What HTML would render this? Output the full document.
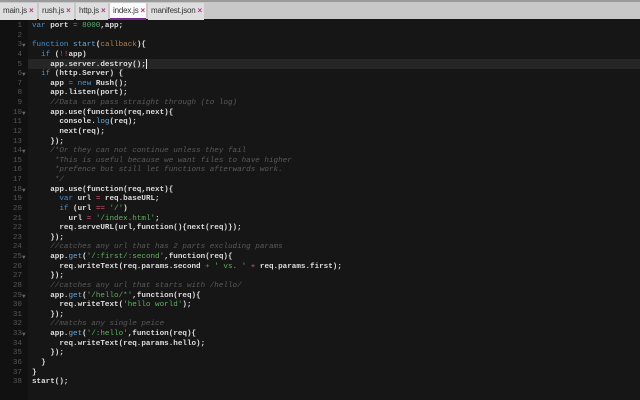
<!DOCTYPE html>
<html><head><meta charset="utf-8"><style>
*{margin:0;padding:0;box-sizing:border-box}
body{width:640px;height:400px;background:#161616;overflow:hidden;font-family:"Liberation Sans",sans-serif;position:relative}
#tabs{position:absolute;left:0;top:0;width:640px;height:19px;background:#c8c8c8;border-top:2px solid #9a9a9a;z-index:2}
.tab{position:absolute;top:1px;height:17px;background:#dedede;font-size:8px;color:#333;line-height:16px;padding-left:3px;letter-spacing:-0.2px}
.tab b{color:#b0308a;font-weight:bold;margin-left:2px}
.tab.act{background:#fafafa;border-bottom:2px solid #7a2a8a}
#gut{position:absolute;left:0;top:19px;width:28px;height:381px;background:#111}
#hl{position:absolute;left:28px;top:59px;width:612px;height:10px;background:#262626}
pre{position:absolute;top:22px;font-family:"Liberation Mono",monospace;font-size:7.6px;line-height:9.62px;}
#nums{left:0;width:22px;text-align:right;color:#555}
#fold{left:22px;color:#666;font-size:6px;line-height:9.62px}
#code{left:32px;color:#ddd;font-weight:bold}
.k{color:#4a90c8;font-weight:normal}.f{color:#6aa8d8;font-weight:normal}.p{color:#b08050;font-weight:normal}
.o{color:#d05070;font-weight:normal}.n{color:#50b070;font-weight:normal}.s{color:#60b060;font-weight:normal}
.c{color:#5a5a5a;font-style:italic;font-weight:normal}
#cur{position:absolute;left:146px;top:59px;width:1px;height:10px;background:#eee}
</style></head><body>
<div id="tabs">
<div class="tab" style="left:0;width:37px">main.js<b>×</b></div>
<div class="tab" style="left:39px;width:35px">rush.js<b>×</b></div>
<div class="tab" style="left:76px;width:32px">http.js<b>×</b></div>
<div class="tab act" style="left:110px;width:36px">index.js<b>×</b></div>
<div class="tab" style="left:148px;width:56px">manifest.json<b>×</b></div>
</div>
<div id="gut"></div>
<div id="hl"></div>
<pre id="nums">1
2
3
4
5
6
7
8
9
10
11
12
13
14
15
16
17
18
19
20
21
22
23
24
25
26
27
28
29
30
31
32
33
34
35
36
37
38</pre>
<pre id="fold">&nbsp;
&nbsp;
▼
&nbsp;
&nbsp;
▼
&nbsp;
&nbsp;
&nbsp;
▼
&nbsp;
&nbsp;
&nbsp;
▼
&nbsp;
&nbsp;
&nbsp;
▼
&nbsp;
&nbsp;
&nbsp;
&nbsp;
&nbsp;
&nbsp;
▼
&nbsp;
&nbsp;
&nbsp;
▼
&nbsp;
&nbsp;
&nbsp;
▼</pre>
<pre id="code"><span class="k">var</span> port <span class="o">=</span> <span class="n">8000</span>,app;

<span class="k">function</span> <span class="f">start</span>(<span class="p">callback</span>){
  <span class="k">if</span> (<span class="o">!!</span>app)
    app.server.destroy();
  <span class="k">if</span> (http.Server) {
    app <span class="o">=</span> <span class="k">new</span> Rush();
    app.listen(port);
    <span class="c">//Data can pass straight through (to log)</span>
    app.use(function(req,next){
      console.<span class="f">log</span>(req);
      next(req);
    });
    <span class="c">/*Or they can not continue unless they fail</span>
<span class="c">     *This is useful because we want files to have higher</span>
<span class="c">     *prefence but still let functions afterwards work.</span>
<span class="c">     */</span>
    app.use(function(req,next){
      <span class="k">var</span> url <span class="o">=</span> req.baseURL;
      <span class="k">if</span> (url <span class="o">==</span> <span class="s">'/'</span>)
        url <span class="o">=</span> <span class="s">'/index.html'</span>;
      req.serveURL(url,function(){next(req)});
    });
    <span class="c">//catches any url that has 2 parts excluding params</span>
    app.<span class="f">get</span>(<span class="s">'/:first/:second'</span>,function(req){
      req.writeText(req.params.second <span class="o">+</span> <span class="s">' vs. '</span> <span class="o">+</span> req.params.first);
    });
    <span class="c">//catches any url that starts with /hello/</span>
    app.<span class="f">get</span>(<span class="s">'/hello/*'</span>,function(req){
      req.writeText(<span class="s">'hello world'</span>);
    });
    <span class="c">//matchs any single peice</span>
    app.<span class="f">get</span>(<span class="s">'/:hello'</span>,function(req){
      req.writeText(req.params.hello);
    });
  }
}
start();</pre>
<div id="cur"></div>
</body></html>
